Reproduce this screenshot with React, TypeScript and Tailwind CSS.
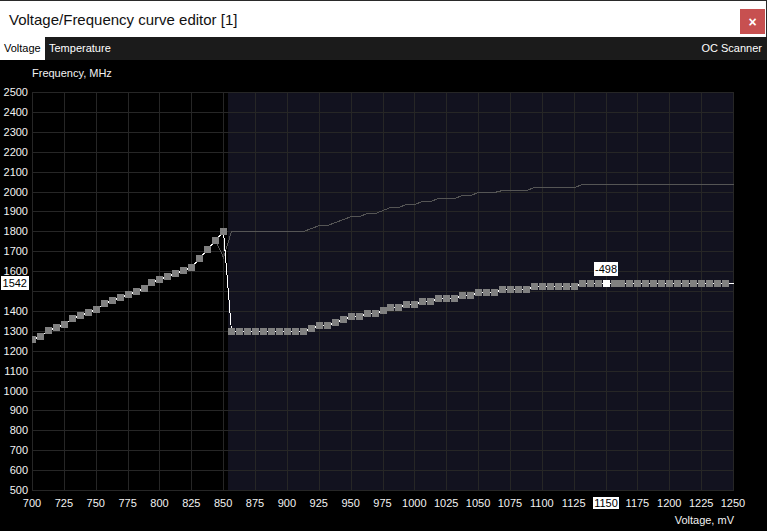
import React from "react";

const PLOT_LEFT = 32;
const PLOT_RIGHT = 733;
const PLOT_TOP = 8;
const PLOT_BOTTOM = 406;

const xOf = (mv: number) => PLOT_LEFT + ((mv - 700) * (PLOT_RIGHT - PLOT_LEFT)) / 550;
const yOf = (mhz: number) => PLOT_TOP + ((2500 - mhz) * (PLOT_BOTTOM - PLOT_TOP)) / 2000;
const px = (n: number) => Math.round(n) + 0.5;

// Frequency points of the edited curve, one per 6.25 mV step
const leftFreqs = [
  1260, 1275, 1305, 1320, 1335, 1365, 1380, 1395, 1410, 1440, 1455, 1470, 1485, 1500, 1515, 1545,
  1560, 1575, 1590, 1605, 1620, 1665, 1710, 1755, 1800,
];
const rightFreqs = [
  ...Array(10).fill(1300),
  1315, 1330, 1330, 1345, 1360, 1375, 1375, 1390, 1390, 1405, 1420, 1420, 1435, 1435, 1450, 1450,
  1465, 1465, 1465, 1480, 1480, 1495, 1495, 1495, 1510, 1510, 1510, 1510,
  ...Array(6).fill(1525),
  ...Array(19).fill(1540),
];

type Pt = { v: number; f: number };
const curve: Pt[] = [
  ...leftFreqs.map((f, i) => ({ v: 700 + i * 6.25, f })),
  ...rightFreqs.map((f, i) => ({ v: 856.25 + i * 6.25, f })),
];

const SELECTED_MV = 1150;

// Default (stock) curve drawn underneath
const stock: Pt[] = [
  ...leftFreqs.slice(0, 24).map((f, i) => ({ v: 700 + i * 6.25, f })),
  { v: 850, f: 1672 },
  { v: 856.25, f: 1800 },
  { v: 912.5, f: 1800 },
  { v: 925, f: 1830 },
  { v: 931.25, f: 1830 },
  { v: 950, f: 1875 },
  { v: 956.25, f: 1875 },
  { v: 962.5, f: 1890 },
  { v: 968.75, f: 1890 },
  { v: 981.25, f: 1920 },
  { v: 987.5, f: 1920 },
  { v: 993.75, f: 1935 },
  { v: 1000, f: 1935 },
  { v: 1006.25, f: 1950 },
  { v: 1012.5, f: 1950 },
  { v: 1018.75, f: 1965 },
  { v: 1031.25, f: 1965 },
  { v: 1037.5, f: 1980 },
  { v: 1043.75, f: 1980 },
  { v: 1050, f: 1995 },
  { v: 1062.5, f: 1995 },
  { v: 1068.75, f: 2010 },
  { v: 1087.5, f: 2010 },
  { v: 1093.75, f: 2025 },
  { v: 1125, f: 2025 },
  { v: 1131.25, f: 2040 },
  { v: 1250, f: 2040 },
];

const toPoints = (pts: Pt[]) => pts.map((p) => `${px(xOf(p.v))},${px(yOf(p.f))}`).join(" ");

const freqTicks = Array.from({ length: 21 }, (_, i) => 2500 - i * 100);
const voltTicks = Array.from({ length: 23 }, (_, i) => 700 + i * 25);

const chartFont = { fontFamily: '"Liberation Sans", Arial, sans-serif' };

function CurveChart() {
  const readoutY = Math.round(yOf(1540));
  const selX = Math.round(xOf(SELECTED_MV));
  return (
    <svg width={767} height={428} className="block" style={chartFont} shapeRendering="crispEdges">
      <defs>
        <clipPath id="plot-clip">
          <rect x={PLOT_LEFT} y={0} width={PLOT_RIGHT - PLOT_LEFT + 2} height={PLOT_BOTTOM + 2} />
        </clipPath>
      </defs>

      {/* locked voltage range */}
      <rect x={228} y={PLOT_TOP} width={PLOT_RIGHT - 228 + 1} height={PLOT_BOTTOM - PLOT_TOP + 1} fill="#12121f" />

      {/* grid */}
      {freqTicks.map((f) => (
        <line key={`h${f}`} x1={PLOT_LEFT} x2={PLOT_RIGHT + 1} y1={px(yOf(f))} y2={px(yOf(f))} stroke="#262626" />
      ))}
      {voltTicks.map((v) => (
        <line key={`v${v}`} y1={PLOT_TOP} y2={PLOT_BOTTOM + 1} x1={px(xOf(v))} x2={px(xOf(v))} stroke="#262626" />
      ))}

      {/* frequency labels */}
      {freqTicks
        .filter((f) => Math.abs(yOf(f) - yOf(1540)) > 9)
        .map((f) => (
          <text key={`fl${f}`} x={28} y={yOf(f) + 4} textAnchor="end" fontSize={11} fill="#f2f2f2">
            {f}
          </text>
        ))}

      {/* voltage labels */}
      {voltTicks.map((v) =>
        v === SELECTED_MV ? (
          <g key={`vl${v}`}>
            <rect x={selX - 13} y={413} width={26} height={12} fill="#ffffff" />
            <text x={selX} y={423} textAnchor="middle" fontSize={11} fill="#000000">
              {v}
            </text>
          </g>
        ) : (
          <text key={`vl${v}`} x={xOf(v)} y={423} textAnchor="middle" fontSize={11} fill="#f2f2f2">
            {v}
          </text>
        )
      )}

      <g clipPath="url(#plot-clip)">
        <polyline points={toPoints(stock)} fill="none" stroke="#555555" strokeWidth={1} />
        <polyline
          points={toPoints([...curve, { v: 1250, f: 1540 }])}
          fill="none"
          stroke="#ffffff"
          strokeWidth={1}
        />
        {curve.map((p) => {
          const cx = Math.round(xOf(p.v));
          const cy = Math.round(yOf(p.f));
          return (
            <rect
              key={`m${p.v}`}
              x={cx - 3}
              y={cy - 3}
              width={7}
              height={7}
              fill={p.v === SELECTED_MV ? "#ffffff" : "#808080"}
            />
          );
        })}
      </g>

      {/* readouts of the selected point */}
      <rect x={1} y={readoutY - 7} width={28} height={14} fill="#ffffff" />
      <text x={27} y={readoutY + 4} textAnchor="end" fontSize={11} fill="#000000">
        1542
      </text>

      <rect x={594} y={178} width={24} height={14} fill="#ffffff" />
      <text x={606} y={189} textAnchor="middle" fontSize={11} fill="#000000">
        -498
      </text>
    </svg>
  );
}

export default function App() {
  return (
    <div
      className="w-[767px] h-[531px] flex flex-col bg-black overflow-hidden"
      style={{ fontFamily: '"Liberation Sans", Arial, sans-serif' }}
    >
      {/* window title */}
      <div className="h-[37px] shrink-0 flex items-center justify-between bg-white border-t border-r border-[#2a2a2a] pl-[9px] pr-[1px]">
        <span className="text-[15px] text-[#111111] leading-none pt-[1px]">Voltage/Frequency curve editor [1]</span>
        <button className="w-[25px] h-[25px] mt-[5px] flex items-center justify-center bg-[#c75050] text-white text-[14px] font-bold leading-none">
          ×
        </button>
      </div>

      {/* tabs */}
      <div className="h-[23px] shrink-0 flex items-stretch bg-[#1b1b1b] text-[11px] leading-none">
        <div className="w-[45px] flex items-center pl-[4px] bg-white text-black">Voltage</div>
        <div className="flex items-center pl-[4px] text-white">Temperature</div>
        <div className="ml-auto flex items-center pr-[5px] text-white">OC Scanner</div>
      </div>

      {/* chart */}
      <div className="flex-1 flex flex-col">
        <div className="h-[24px] flex items-center pl-[32px] pt-[3px] text-[11px] text-[#f2f2f2]">Frequency, MHz</div>
        <CurveChart />
        <div className="flex-1 flex items-start justify-end pr-[33px] pt-[3px] text-[11px] text-[#f2f2f2] leading-none">
          Voltage, mV
        </div>
      </div>
    </div>
  );
}
